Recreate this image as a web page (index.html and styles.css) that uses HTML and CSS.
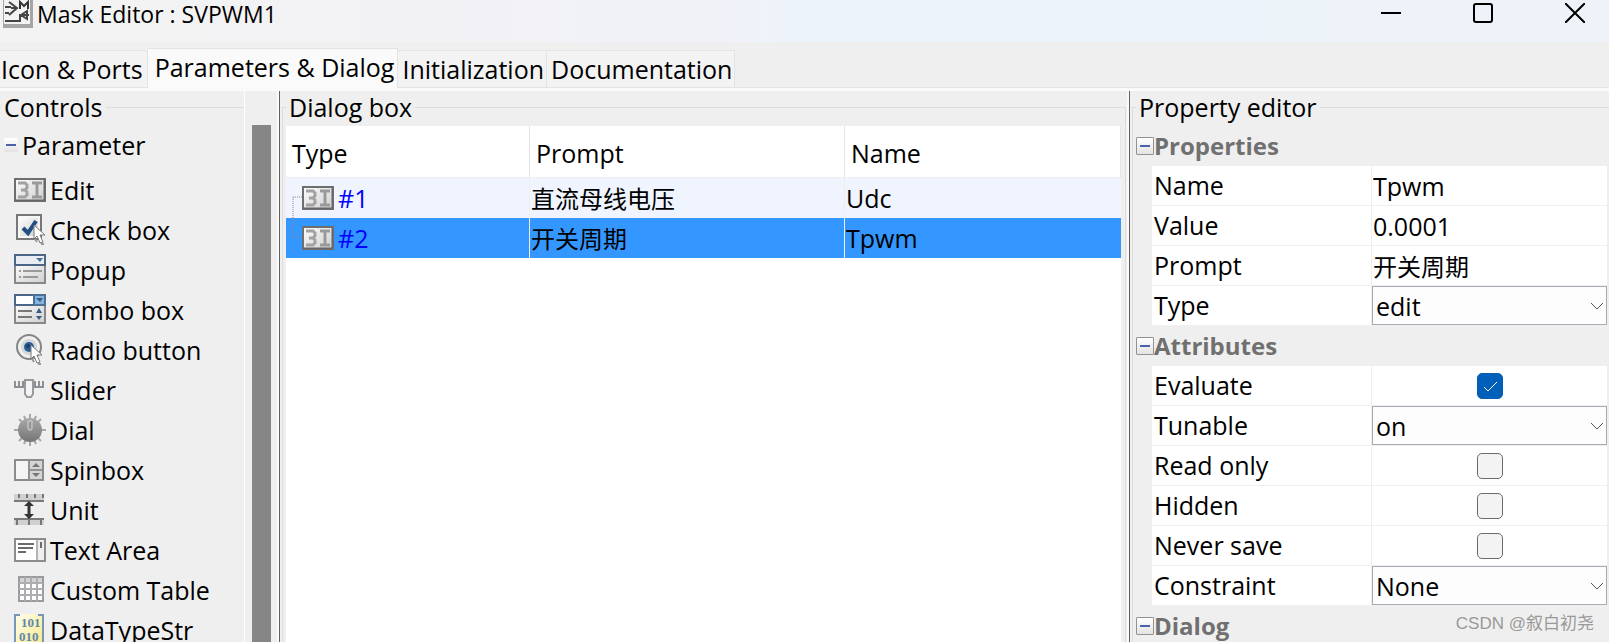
FILE: index.html
```html
<!DOCTYPE html>
<html lang="en">
<head>
    <meta charset="UTF-8">
    <meta name="viewport" content="width=device-width, initial-scale=1.0">
    <title>Mask Editor : SVPWM1</title>
    <link rel="stylesheet" href="styles.css">
</head>
<body>
    <svg class="defs" aria-hidden="true">
        <defs>
            <linearGradient id="shade" x1="0" y1="0" x2="1" y2="1">
                <stop offset="0" stop-color="#fcfcfc"/>
                <stop offset="1" stop-color="#cfcfcf"/>
            </linearGradient>
            <linearGradient id="knob" x1="0" y1="0" x2="0" y2="1">
                <stop offset="0" stop-color="#a8a8a8"/>
                <stop offset="1" stop-color="#757575"/>
            </linearGradient>
            <linearGradient id="yellow" x1="0" y1="0" x2="1" y2="1">
                <stop offset="0" stop-color="#fffef0"/>
                <stop offset="1" stop-color="#f6e888"/>
            </linearGradient>
        </defs>
        <symbol id="icon-edit" viewBox="0 0 32 32">
            <rect x="1" y="5" width="30" height="22" fill="url(#shade)" stroke="#6e6e6e" stroke-width="2"/>
            <path d="M2 26h28V6" fill="none" stroke="#606060"/>
            <path d="M4 9h7l2 2v3l-2 2H7h4l2 2v3l-2 2H4" fill="none" stroke="#a2a2a2" stroke-width="3"/>
            <path d="M18 9h10M23 9v14M18 23h10" fill="none" stroke="#999" stroke-width="3"/>
        </symbol>
        <symbol id="pointer" viewBox="0 0 12 22">
            <path d="M1 1v14l3-3 3 7 3-1-3-7h5z" fill="#fff" stroke="#777"/>
            <path d="M2 15l2 3M8 20h3" stroke="#999" stroke-width="2"/>
        </symbol>
        <symbol id="icon-check" viewBox="0 0 32 32">
            <rect x="3" y="1" width="24" height="24" fill="#f6f6f6" stroke="#777" stroke-width="2"/>
            <rect x="6" y="4" width="18" height="18" fill="url(#shade)"/>
            <path d="M9 14l5 5 8-12" fill="none" stroke="#1f4e80" stroke-width="4"/>
            <use href="#pointer" x="19" y="10" width="12" height="22"/>
        </symbol>
        <symbol id="icon-popup" viewBox="0 0 32 32">
            <rect x="1" y="10" width="30" height="19" fill="url(#shade)" stroke="#888" stroke-width="2"/>
            <rect x="1" y="1" width="30" height="10" fill="#e8edf3" stroke="#4c6685" stroke-width="2"/>
            <path d="M22 4h7l-3 4z" fill="#4c6f96"/>
            <path d="M5 17h2M9 17h19M5 23h2M9 23h15" stroke="#999" stroke-width="2"/>
        </symbol>
        <symbol id="icon-combo" viewBox="0 0 32 32">
            <rect x="1" y="10" width="30" height="19" fill="url(#shade)" stroke="#888" stroke-width="2"/>
            <rect x="1" y="1" width="30" height="10" fill="#fff" stroke="#4c6685" stroke-width="2"/>
            <rect x="20" y="1" width="11" height="10" fill="#86b3dc" stroke="#4c7095" stroke-width="2"/>
            <path d="M22 4h7l-3 4zM22 19h6l-3-5zM22 22h6l-3 4z" fill="#365c86"/>
            <path d="M4 17h14M4 23h14" stroke="#777" stroke-width="2"/>
        </symbol>
        <symbol id="icon-radio" viewBox="0 0 32 32">
            <circle cx="15" cy="13" r="12" fill="#f0f0f0" stroke="#858585" stroke-width="2"/>
            <circle cx="15" cy="13" r="8" fill="#d2d6da"/>
            <circle cx="15" cy="13" r="5" fill="#2a5f94"/>
            <circle cx="14" cy="12" r="2" fill="#173f69"/>
            <use href="#pointer" x="16" y="10" width="12" height="22"/>
        </symbol>
        <symbol id="icon-slider" viewBox="0 0 32 32">
            <path d="M0 13h10M20 13h10M1 7v6M5 7v6M9 7v6M21 7v6M25 7v6M29 7v6" stroke="#8b9096" stroke-width="2"/>
            <path d="M11 6h8v14l-2 3h-4l-2-3z" fill="#f4f4f4" stroke="#999" stroke-width="2"/>
        </symbol>
        <symbol id="icon-dial" viewBox="0 0 32 32">
            <path d="M16 0v32M0 16h32M5 5l22 22M27 5L5 27M10 2l12 28M22 2L10 30" stroke="#a3a8ac" stroke-width="2"/>
            <circle cx="16" cy="16" r="12" fill="url(#knob)"/>
            <path d="M14 7v8q2 3 4 0V7z" fill="#999" stroke="#d2d2d2"/>
        </symbol>
        <symbol id="icon-spin" viewBox="0 0 32 32">
            <rect x="1" y="6" width="28" height="20" fill="#f5f5f5" stroke="#8c8c8c" stroke-width="2"/>
            <rect x="16" y="7" width="12" height="18" fill="#d5d5d5"/>
            <path d="M15 6v20M16 16h12" stroke="#929292" stroke-width="2"/>
            <path d="M18 13h8l-4-4zM18 19h8l-4 4z" fill="#777"/>
        </symbol>
        <symbol id="icon-unit" viewBox="0 0 32 32">
            <path d="M0 0h30v6H0zM0 25h30v6H0z" fill="#d0d0d0"/>
            <path d="M0 7h30M0 25h30" stroke="#7a7a7a" stroke-width="2"/>
            <path d="M5 0v4M13 0v4M21 0v4M29 0v4M3 26v5M15 26v5M27 26v5" stroke="#777" stroke-width="2"/>
            <path d="M15 9v14" stroke="#333" stroke-width="3"/>
            <path d="M10 12h10l-5-5zM10 20h10l-5 5z" fill="#333"/>
        </symbol>
        <symbol id="icon-text" viewBox="0 0 32 32">
            <rect x="1" y="5" width="30" height="22" fill="#fff" stroke="#8c8c8c" stroke-width="2"/>
            <path d="M23 6h7v20h-7z" fill="#eee"/>
            <path d="M23 6v20" stroke="#b5b5b5" stroke-width="2"/>
            <path d="M4 10h16M4 14h15M4 18h8M27 8v6" stroke="#6b6b6b" stroke-width="2"/>
        </symbol>
        <symbol id="icon-table" viewBox="0 0 32 32">
            <rect x="5" y="3" width="24" height="24" fill="#fff" stroke="#9a9a9f" stroke-width="2"/>
            <path d="M6 4h22v5H6z" fill="#d2d2d4"/>
            <path d="M5 9h24M5 15h24M5 21h24M11 3v24M17 3v24M23 3v24" stroke="#aeaeb2" stroke-width="2"/>
        </symbol>
        <symbol id="icon-data" viewBox="0 0 32 32">
            <path d="M1 0h28v32H1z" fill="url(#yellow)"/>
            <path d="M6 1H1v30h5M24 1h5v30h-5" fill="none" stroke="#7897b4" stroke-width="2"/>
            <text x="7" y="13">101</text>
            <text x="5" y="27">010</text>
        </symbol>
    </svg>

    <header class="titlebar">
        <svg class="app-icon" viewBox="0 0 30 28" aria-hidden="true">
            <rect width="30" height="28" fill="#a5a5a5"/>
            <rect x="1" width="26" height="24" fill="#f3f3f3"/>
            <path d="M2 7h6M2 13h4M6 2l8 6-8 7M8 8l6 0M2 21h15v-6h9M18 15l6-4v8z" fill="none" stroke="#444" stroke-width="2"/>
            <path d="M17 9V2l4 4 4-4v7" fill="none" stroke="#333" stroke-width="2"/>
        </svg>
        <h1>Mask Editor : SVPWM1</h1>
        <div class="window-buttons">
            <button aria-label="Minimize"><svg viewBox="0 0 20 20"><path d="M0 10h20"/></svg></button>
            <button aria-label="Maximize"><svg viewBox="0 0 20 20"><rect x="1" y="1" width="18" height="18" rx="2"/></svg></button>
            <button aria-label="Close"><svg viewBox="0 0 20 20"><path d="M0 0l20 20M20 0L0 20"/></svg></button>
        </div>
    </header>

    <nav class="tabs">
        <button class="tab">Icon &amp; Ports</button>
        <button class="tab active">Parameters &amp; Dialog</button>
        <button class="tab">Initialization</button>
        <button class="tab">Documentation</button>
    </nav>

    <main class="panes">
        <section class="pane controls">
            <fieldset class="group">
                <legend>Controls</legend>
                <div class="tree-root"><button class="toggle plain" aria-label="Collapse Parameter"></button>Parameter</div>
                <ul class="control-list">
                    <li><svg class="icon"><use href="#icon-edit"/></svg>Edit</li>
                    <li><svg class="icon"><use href="#icon-check"/></svg>Check box</li>
                    <li><svg class="icon"><use href="#icon-popup"/></svg>Popup</li>
                    <li><svg class="icon"><use href="#icon-combo"/></svg>Combo box</li>
                    <li><svg class="icon"><use href="#icon-radio"/></svg>Radio button</li>
                    <li><svg class="icon"><use href="#icon-slider"/></svg>Slider</li>
                    <li><svg class="icon"><use href="#icon-dial"/></svg>Dial</li>
                    <li><svg class="icon"><use href="#icon-spin"/></svg>Spinbox</li>
                    <li><svg class="icon"><use href="#icon-unit"/></svg>Unit</li>
                    <li><svg class="icon"><use href="#icon-text"/></svg>Text Area</li>
                    <li><svg class="icon"><use href="#icon-table"/></svg>Custom Table</li>
                    <li><svg class="icon"><use href="#icon-data"/></svg>DataTypeStr</li>
                </ul>
            </fieldset>
            <div class="scrollbar"><div class="thumb"></div></div>
        </section>

        <section class="pane dialog">
            <fieldset class="group">
                <legend>Dialog box</legend>
                <div class="table-wrap">
                    <table class="params">
                        <thead>
                            <tr><th class="col-type">Type</th><th class="col-prompt">Prompt</th><th>Name</th></tr>
                        </thead>
                        <tbody>
                            <tr class="odd">
                                <td><div class="type-cell"><svg class="branch" viewBox="0 0 16 40"><path d="M7 40V19M7 19h9"/></svg><svg class="icon"><use href="#icon-edit"/></svg>#1</div></td>
                                <td class="zh" lang="zh">直流母线电压</td>
                                <td>Udc</td>
                            </tr>
                            <tr class="selected">
                                <td><div class="type-cell"><svg class="branch" viewBox="0 0 16 40"><path d="M7 0v19M7 19h9"/></svg><svg class="icon"><use href="#icon-edit"/></svg>#2</div></td>
                                <td class="zh" lang="zh">开关周期</td>
                                <td>Tpwm</td>
                            </tr>
                        </tbody>
                    </table>
                </div>
            </fieldset>
        </section>

        <section class="pane properties">
            <fieldset class="group">
                <legend>Property editor</legend>
                <h2><button class="toggle" aria-label="Collapse Properties"></button>Properties</h2>
                <div class="grid">
                    <div class="row"><label for="name">Name</label><input type="text" id="name" value="Tpwm"></div>
                    <div class="row"><label for="value">Value</label><input type="text" id="value" value="0.0001"></div>
                    <div class="row"><label for="prompt">Prompt</label><input type="text" id="prompt" class="zh" lang="zh" value="开关周期"></div>
                    <div class="row"><label for="type">Type</label><div class="select"><select id="type"><option>edit</option></select><svg viewBox="0 0 14 8"><path d="M1 1l6 6 6-6"/></svg></div></div>
                </div>
                <h2><button class="toggle" aria-label="Collapse Attributes"></button>Attributes</h2>
                <div class="grid">
                    <div class="row"><label for="evaluate">Evaluate</label><div class="check"><input type="checkbox" id="evaluate" checked><svg viewBox="0 0 26 26"><path d="M7 14l4 4 9-9"/></svg></div></div>
                    <div class="row"><label for="tunable">Tunable</label><div class="select"><select id="tunable"><option>on</option></select><svg viewBox="0 0 14 8"><path d="M1 1l6 6 6-6"/></svg></div></div>
                    <div class="row"><label for="readonly">Read only</label><div class="check"><input type="checkbox" id="readonly"></div></div>
                    <div class="row"><label for="hidden">Hidden</label><div class="check"><input type="checkbox" id="hidden"></div></div>
                    <div class="row"><label for="never-save">Never save</label><div class="check"><input type="checkbox" id="never-save"></div></div>
                    <div class="row"><label for="constraint">Constraint</label><div class="select"><select id="constraint"><option>None</option></select><svg viewBox="0 0 14 8"><path d="M1 1l6 6 6-6"/></svg></div></div>
                </div>
                <h2><button class="toggle" aria-label="Collapse Dialog"></button>Dialog</h2>
            </fieldset>
        </section>
    </main>
    <div class="watermark">CSDN @叙白初尧</div>
</body>
</html>
```
FILE: styles.css
```css
* {
    box-sizing: border-box;
}

body {
    margin: 0;
    height: 100vh;
    display: flex;
    flex-direction: column;
    overflow: hidden;
    background: #efefef;
    color: #000;
    font-family: "Open Sans", "Noto Sans CJK SC", sans-serif;
    font-size: 25px;
    line-height: 30px;
    white-space: nowrap;
}

button, input, select {
    font: inherit;
    color: inherit;
    margin: 0;
    padding: 0;
    border: none;
    background: none;
}

.defs {
    position: absolute;
    width: 0;
    height: 0;
}

.defs text {
    font: bold 13px "Liberation Serif", serif;
    fill: #5f87aa;
}

.zh {
    font-family: "Noto Sans CJK SC", sans-serif;
    font-size: 24px;
}

.icon {
    width: 32px;
    height: 32px;
    flex: none;
}

/* title bar */
.titlebar {
    flex: none;
    height: 42px;
    display: flex;
    align-items: flex-start;
    padding: 0 24px 0 3px;
    background: linear-gradient(90deg, #f3f3f3 0%, #f2f2f6 30%, #f0f2f8 45%, #edf3fb 50%, #edf3f8 100%);
}

.app-icon {
    width: 30px;
    height: 28px;
}

.titlebar h1 {
    margin: 0 auto 0 4px;
    font-size: 23px;
    font-weight: normal;
    line-height: 28px;
}

.window-buttons {
    display: flex;
    gap: 72px;
    padding-top: 3px;
}

.window-buttons button {
    width: 20px;
    height: 20px;
}

.window-buttons svg {
    display: block;
    fill: none;
    stroke: #000;
    stroke-width: 2;
}

/* tabs */
.tabs {
    flex: none;
    height: 49px;
    display: flex;
    align-items: flex-end;
    padding-top: 6px;
    border-bottom: 3px solid #fafafa;
    box-shadow: inset 0 -1px #e3e3e3;
}

.tab {
    height: 38px;
    padding: 0 2px 0 4px;
    border: 1px solid #e3e3e3;
    border-left: none;
    background: #f3f3f3;
}

.tab:first-child {
    padding: 0 4px 0 1px;
}

.tab.active {
    height: 40px;
    padding: 0 3px 4px 7px;
    border-bottom: none;
    background: #fafafa;
}

/* panes */
.panes {
    flex: 1;
    min-height: 0;
    display: grid;
    grid-template-columns: 280px 1fr 479px;
}

.pane {
    min-width: 0;
    display: flex;
    overflow: hidden;
}

.controls, .dialog {
    border-right: 1px solid #606060;
    box-shadow: inset -2px 0 #fafafa;
}

.group {
    flex: 1;
    min-width: 0;
    margin: 1px 3px 0 2px;
    padding: 4px 4px 0 3px;
    border: 1px solid #dcdcdc;
    border-bottom: none;
}

.group legend {
    padding: 0 3px;
}

.controls .group {
    margin: 1px 0 0;
    padding: 4px 0 0 4px;
    border-left: none;
    border-right: none;
}

.controls .group legend {
    margin-left: -3px;
}

.tree-root {
    display: flex;
    align-items: center;
    gap: 4px;
    height: 38px;
}

.toggle {
    flex: none;
    width: 18px;
    height: 18px;
    border: 1px solid #929292;
    border-radius: 1px;
    background: linear-gradient(#4a62ad, #4a62ad) center / 10px 2px no-repeat, linear-gradient(#fff, #e3e3e3);
}

.toggle.plain {
    width: 14px;
    height: 14px;
    border: none;
}

.control-list {
    margin: 6px 0 0;
    padding: 0 0 0 10px;
    list-style: none;
}

.control-list li {
    display: flex;
    align-items: center;
    gap: 4px;
    height: 40px;
}

.scrollbar {
    width: 35px;
    padding: 34px 8px 0 7px;
    border-left: 1px solid #fff;
}

.thumb {
    height: 100%;
    background: #868686;
}

/* dialog box table */
.dialog .group {
    display: flex;
    flex-direction: column;
}

.table-wrap {
    flex: 1;
    background: #fff;
}

.params {
    width: 100%;
    table-layout: fixed;
    border-collapse: separate;
    border-spacing: 0;
}

.params th {
    height: 52px;
    padding: 2px 6px 0;
    text-align: left;
    font-weight: normal;
    border-right: 1px solid #e5e5e5;
    border-bottom: 1px solid #eee;
}

.col-type {
    width: 244px;
}

.col-prompt {
    width: 315px;
}

.params td {
    height: 40px;
    padding: 0 1px;
    border-right: 1px solid #eee;
}

.params td:first-child {
    padding: 0;
}

.params td:last-child {
    border-right: none;
}

.odd td {
    background: #f0f4ff;
}

.selected td {
    background: #3397ff;
}

.type-cell {
    display: flex;
    align-items: center;
    color: #00f;
}

.type-cell .icon {
    margin-right: 4px;
}

.branch {
    width: 16px;
    height: 40px;
}

.branch path {
    fill: none;
    stroke: #8a8a8a;
    stroke-dasharray: 1 1;
}

/* property editor */
.properties .group {
    margin-right: 0;
    padding-right: 2px;
    border-right: none;
}

.properties h2 {
    display: flex;
    align-items: center;
    height: 40px;
    margin: 0;
    font-size: 24px;
    font-weight: 700;
    color: #707070;
}

.grid {
    margin-left: 16px;
}

.row {
    display: grid;
    grid-template-columns: 220px 1fr;
    height: 40px;
    background: #fff;
    border-bottom: 1px solid #efefef;
}

.row label {
    padding: 4px 2px;
    border-right: 1px solid #efefef;
}

.row input[type="text"] {
    min-width: 0;
    padding: 0 1px;
}

.select {
    display: flex;
    align-items: center;
    border: 1px solid #a9a9b3;
    background: #fdfdfd;
    padding-right: 2px;
}

.select select {
    flex: 1;
    min-width: 0;
    height: 100%;
    padding-left: 3px;
    appearance: none;
}

.select svg {
    width: 14px;
    height: 8px;
    fill: none;
    stroke: #555;
}

.check {
    display: grid;
    place-items: center;
}

.check input {
    grid-area: 1 / 1;
    appearance: none;
    width: 26px;
    height: 26px;
    border: 1px solid #6a6a6a;
    border-radius: 5px;
    background: #f3f3f3;
}

.check input:checked {
    border-color: #005fb8;
    background: #005fb8;
}

.check svg {
    grid-area: 1 / 1;
    width: 26px;
    height: 26px;
    fill: none;
    stroke: #fff;
    pointer-events: none;
}

.watermark {
    position: absolute;
    right: 15px;
    bottom: 3px;
    font-family: "Liberation Sans", "Noto Sans CJK SC", sans-serif;
    font-size: 17px;
    color: #999;
}
```
